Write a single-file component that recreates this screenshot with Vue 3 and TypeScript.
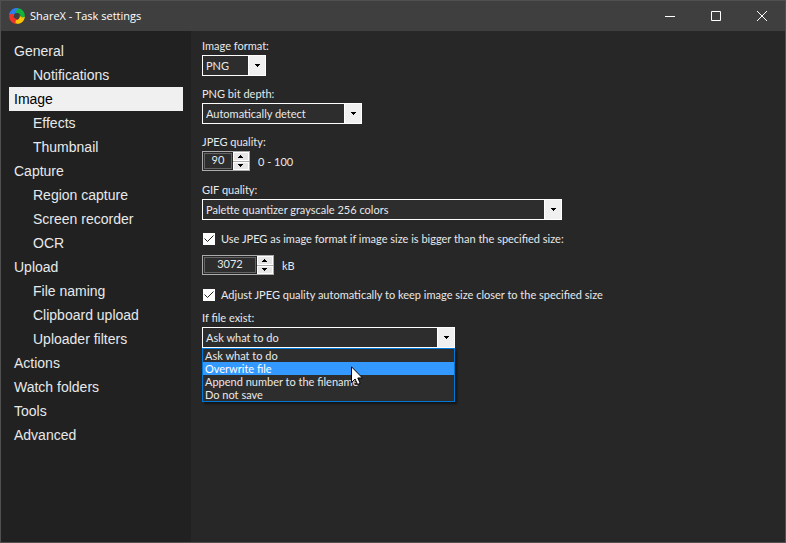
<script setup lang="ts">
import { ref } from 'vue'

interface NavItem {
  label: string
  child?: boolean
}

const nav: NavItem[] = [
  { label: 'General' },
  { label: 'Notifications', child: true },
  { label: 'Image' },
  { label: 'Effects', child: true },
  { label: 'Thumbnail', child: true },
  { label: 'Capture' },
  { label: 'Region capture', child: true },
  { label: 'Screen recorder', child: true },
  { label: 'OCR', child: true },
  { label: 'Upload' },
  { label: 'File naming', child: true },
  { label: 'Clipboard upload', child: true },
  { label: 'Uploader filters', child: true },
  { label: 'Actions' },
  { label: 'Watch folders' },
  { label: 'Tools' },
  { label: 'Advanced' },
]

const current = ref('Image')
const imageFormat = ref('PNG')
const bitDepth = ref('Automatically detect')
const gifQuality = ref('Palette quantizer grayscale 256 colors')
const jpegQuality = ref(90)
const sizeLimit = ref(3072)
const useJpeg = ref(true)
const autoQuality = ref(true)

const existOptions = ['Ask what to do', 'Overwrite file', 'Append number to the filename', 'Do not save']
const existAction = ref(existOptions[0])
const hovered = ref(existOptions[1])
const menuOpen = ref(true)

function choose(option: string) {
  existAction.value = option
  menuOpen.value = false
}
</script>

<template>
  <div class="window">
    <header class="titlebar">
      <svg class="logo" viewBox="0 0 16 16" aria-hidden="true">
        <path fill="#2f7cf0" d="M.5 6.500C1 2.800 4 .2 7.500 .2 10.500 .2 12.500 2 12.600 5 10.800 3.600 8.600 3.600 7 4.600 5.600 5.400 4.900 6.600 4.800 8.200 2.800 8.600 1.200 8 .5 6.500Z" />
        <path fill="#12b53c" d="M8.500 .2C12.500 .2 15.800 3.500 15.800 7.500 15.800 10.500 14 12.500 11 12.600 12.400 10.800 12.400 8.600 11.400 7 10.400 5.300 8.500 4.800 6.500 5.300 6.300 2.800 7 1.200 8.500 .2Z" />
        <path fill="#fbc506" d="M15.800 8.500C15.800 12.500 12.500 15.800 8.500 15.800 5.500 15.800 3.500 14 3.400 11 5.200 12.400 7.400 12.400 9 11.400 10.700 10.400 11.300 8.500 10.700 6.500 11.500 9.500 14 10.200 15.800 8.500Z" />
        <path fill="#ee3528" d="M7.500 15.800C3.500 15.800 .2 12.500 .2 8.500 .2 5.500 2 3.500 5 3.400 3.600 5.200 3.600 7.400 4.600 9 5.600 10.700 7.500 11.300 9.500 10.700 6.500 11.500 5.800 14 7.500 15.800Z" />
        <path fill="#2f7cf0" d="M.2 7.500C.2 3.500 3.500 .2 7.500 .2L9 .5C7.500 1.400 7 3 7.200 4.400 6 4.600 5 5.400 4.700 6.800 3.500 5 1.500 5.500 .2 7.500Z" />
      </svg>
      <h1>ShareX - Task settings</h1>
      <div class="window-buttons">
        <button type="button" aria-label="Minimize">
          <svg viewBox="0 0 10 10"><path d="M0 5.500H10" /></svg>
        </button>
        <button type="button" aria-label="Maximize">
          <svg viewBox="0 0 10 10"><path d="M.5 .5H9.500V9.500H.5Z" /></svg>
        </button>
        <button type="button" aria-label="Close">
          <svg viewBox="0 0 10 10"><path d="M0 0L10 10M10 0L0 10" /></svg>
        </button>
      </div>
    </header>

    <div class="body">
      <nav class="sidebar">
        <a
          v-for="item in nav"
          :key="item.label"
          href="#"
          :class="{ child: item.child, active: item.label === current }"
          @click.prevent="current = item.label"
        >{{ item.label }}</a>
      </nav>

      <main class="content">
        <div class="field">
          <label for="format">Image format:</label>
          <div class="combo tiny">
            <select id="format" v-model="imageFormat">
              <option>PNG</option>
              <option>JPEG</option>
              <option>GIF</option>
            </select>
            <span class="arrow"><svg viewBox="0 0 5 3"><path d="M0 0H5V1H4V2H3V3H2V2H1V1H0Z" /></svg></span>
          </div>
        </div>

        <div class="field">
          <label for="depth">PNG bit depth:</label>
          <div class="combo small">
            <select id="depth" v-model="bitDepth">
              <option>Automatically detect</option>
            </select>
            <span class="arrow"><svg viewBox="0 0 5 3"><path d="M0 0H5V1H4V2H3V3H2V2H1V1H0Z" /></svg></span>
          </div>
        </div>

        <div class="field">
          <label for="jpeg">JPEG quality:</label>
          <div class="line">
            <div class="spinner narrow">
              <input id="jpeg" v-model.number="jpegQuality" type="text" inputmode="numeric" />
              <div class="steps">
                <button type="button" aria-label="Increase quality" @click="jpegQuality++">
                  <svg viewBox="0 0 5 3"><path d="M2 0H3V1H4V2H5V3H0V2H1V1H2Z" /></svg>
                </button>
                <button type="button" aria-label="Decrease quality" @click="jpegQuality--">
                  <svg viewBox="0 0 5 3"><path d="M0 0H5V1H4V2H3V3H2V2H1V1H0Z" /></svg>
                </button>
              </div>
            </div>
            <span>0 - 100</span>
          </div>
        </div>

        <div class="field">
          <label for="gif">GIF quality:</label>
          <div class="combo large">
            <select id="gif" v-model="gifQuality">
              <option>Palette quantizer grayscale 256 colors</option>
            </select>
            <span class="arrow"><svg viewBox="0 0 5 3"><path d="M0 0H5V1H4V2H3V3H2V2H1V1H0Z" /></svg></span>
          </div>
        </div>

        <div class="limit">
          <label class="check">
            <input v-model="useJpeg" type="checkbox" />
            <svg viewBox="0 0 12 12"><path d="M1.500 5.500L4.500 8.500L10.500 2.500" /></svg>
            <span>Use JPEG as image format if image size is bigger than the specified size:</span>
          </label>
          <div class="line">
            <div class="spinner wide">
              <input id="limit" v-model.number="sizeLimit" type="text" inputmode="numeric" />
              <div class="steps">
                <button type="button" aria-label="Increase size" @click="sizeLimit++">
                  <svg viewBox="0 0 5 3"><path d="M2 0H3V1H4V2H5V3H0V2H1V1H2Z" /></svg>
                </button>
                <button type="button" aria-label="Decrease size" @click="sizeLimit--">
                  <svg viewBox="0 0 5 3"><path d="M0 0H5V1H4V2H3V3H2V2H1V1H0Z" /></svg>
                </button>
              </div>
            </div>
            <label for="limit">kB</label>
          </div>
        </div>

        <label class="check">
          <input v-model="autoQuality" type="checkbox" />
          <svg viewBox="0 0 12 12"><path d="M1.500 5.500L4.500 8.500L10.500 2.500" /></svg>
          <span>Adjust JPEG quality automatically to keep image size closer to the specified size</span>
        </label>

        <div class="field exist">
          <label for="exist">If file exist:</label>
          <div class="combo medium">
            <button id="exist" type="button" class="combo-button" aria-haspopup="listbox" :aria-expanded="menuOpen" @click="menuOpen = !menuOpen">
              {{ existAction }}
            </button>
            <span class="arrow"><svg viewBox="0 0 5 3"><path d="M0 0H5V1H4V2H3V3H2V2H1V1H0Z" /></svg></span>
            <ul v-if="menuOpen" class="menu" role="listbox" aria-label="If file exist">
              <li
                v-for="option in existOptions"
                :key="option"
                role="option"
                :aria-selected="option === existAction"
                :class="{ hovered: option === hovered }"
                @mouseenter="hovered = option"
                @click="choose(option)"
              >{{ option }}</li>
            </ul>
            <svg v-if="menuOpen" class="pointer" viewBox="0 0 12 19" aria-hidden="true">
              <path d="M.5 .8V16.500L4.100 13L6.600 18.500L9.200 17.300L6.800 12H11.500Z" />
            </svg>
          </div>
        </div>
      </main>
    </div>
  </div>
</template>

<style>
body {
  margin: 0;
  background: #272727;
}
</style>

<style scoped>
* {
  box-sizing: border-box;
}

.window {
  display: flex;
  flex-direction: column;
  min-height: 100vh;
  border: 1px solid #505050;
  background: #272727;
  color: #e7e9ea;
  font-family: Lato, "Liberation Sans", sans-serif;
  font-size: 11px;
  line-height: 13px;
}

button,
input,
select {
  margin: 0;
  border: 0;
  border-radius: 0;
  color: inherit;
  font: inherit;
  outline: 0;
}

.titlebar {
  display: flex;
  align-items: center;
  height: 30px;
  padding-left: 8px;
  background: #3f3f3f;
  color: #fff;
}

.logo {
  width: 16px;
  height: 16px;
}

h1 {
  flex: 1;
  margin: 0 0 0 5px;
  font: 400 11px/16px "Open Sans", "Noto Sans", sans-serif;
}

.window-buttons {
  display: flex;
}

.window-buttons button {
  display: grid;
  place-items: center;
  width: 46px;
  height: 30px;
  padding: 0;
  background: transparent;
}

.window-buttons svg {
  width: 10px;
  height: 10px;
  overflow: visible;
  fill: none;
  stroke: #fff;
  stroke-width: 1;
}

.body {
  display: flex;
  flex: 1;
}

.sidebar {
  display: flex;
  flex-direction: column;
  width: 190px;
  padding: 8px;
  background: #212121;
  font-family: "Liberation Sans", Arial, sans-serif;
  font-size: 14px;
  line-height: 24px;
}

.sidebar a {
  padding-left: 5px;
  color: inherit;
  text-decoration: none;
}

.sidebar a.child {
  padding-left: 24px;
}

.sidebar a.active {
  background: #f0f0f0;
  color: #000;
}

.content {
  flex: 1;
  padding: 9px 11px;
}

.field {
  display: flex;
  flex-direction: column;
  align-items: flex-start;
  gap: 4px;
  margin-bottom: 12px;
}

.field > label {
  line-height: 11px;
}

.combo {
  position: relative;
  display: grid;
  grid-template-columns: 1fr 17px;
  max-width: 100%;
  height: 21px;
  border: 1px solid #fff;
  background: #2d2d2d;
}

.tiny {
  width: 64px;
}

.small {
  width: 160px;
}

.medium {
  width: 253px;
}

.large {
  width: 360px;
}

.combo select,
.combo-button {
  grid-area: 1 / 1 / 2 / 3;
  appearance: none;
  padding: 0 20px 0 3px;
  background: transparent;
  text-align: left;
}

.arrow {
  display: grid;
  grid-area: 1 / 2 / 2 / 3;
  place-items: center;
  padding-left: 1px;
  border-left: 1px solid #fff;
  background: #f0f0f0;
  pointer-events: none;
}

.arrow svg,
.steps svg {
  width: 5px;
  height: 3px;
  fill: #000;
}

.line {
  display: flex;
  align-items: center;
  gap: 8px;
  height: 21px;
}

.spinner {
  display: flex;
  align-self: flex-start;
  gap: 1px;
  height: 20px;
  padding: 1px 0 1px 1px;
  border: 1px solid #acacac;
}

.narrow {
  width: 48px;
}

.wide {
  width: 72px;
}

.spinner input {
  flex: 1;
  width: 0;
  padding: 0 0 3px;
  border: 1px solid #646464;
  background: #2d2d2d;
  text-align: center;
}

.steps {
  display: flex;
  flex-direction: column;
  gap: 1px;
  width: 16px;
  margin: -1px 0;
  background: #acacac;
}

.steps button {
  display: grid;
  flex: 1;
  place-items: center;
  padding: 0 1px 0 0;
  border: 1px solid #fff;
  background: #e6e6e6;
}

.limit {
  margin-bottom: 12px;
}

.limit .line {
  margin-top: 9px;
}

.check {
  display: grid;
  grid-template-columns: 12px 1fr;
  align-items: center;
  column-gap: 6px;
  height: 14px;
  padding-left: 1px;
}

.check span {
  line-height: 11px;
  padding-bottom: 1px;
}

.check input {
  grid-area: 1 / 1;
  appearance: none;
  width: 12px;
  height: 12px;
  background: #fff;
}

.check svg {
  grid-area: 1 / 1;
  width: 12px;
  height: 12px;
  fill: none;
  stroke: transparent;
  stroke-width: 1;
  pointer-events: none;
}

.check input:checked + svg {
  stroke: #222;
}

.exist {
  margin: 10px 0 0;
}

.menu {
  position: absolute;
  top: 20px;
  right: -1px;
  left: -1px;
  margin: 0;
  padding: 0;
  border: 1px solid #0078d7;
  background: #2d2d2d;
  box-shadow: 2px 2px 2px rgba(0, 0, 0, 0.5);
  list-style: none;
}

.menu li {
  padding: 1px 0 0 2px;
  line-height: 12px;
}

.menu li.hovered {
  background: #3399ff;
  color: #fff;
}

.pointer {
  position: absolute;
  top: 38px;
  left: 148px;
  width: 12px;
  height: 19px;
  fill: #fff;
  stroke: #000;
  stroke-width: 1;
  pointer-events: none;
}
</style>
